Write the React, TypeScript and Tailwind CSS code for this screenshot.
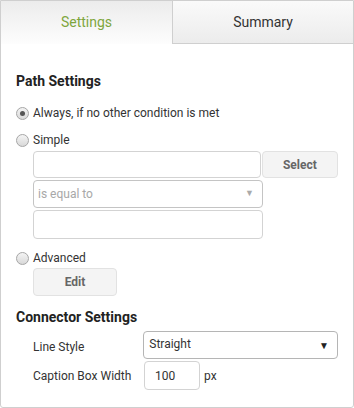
import React from "react";

function Radio({ checked }: { checked?: boolean }) {
  return (
    <span className="relative inline-block w-[13px] h-[13px] rounded-full border border-[#a6a6a6] bg-gradient-to-b from-[#f4f4f4] to-[#d9d9d9] shrink-0">
      {checked && (
        <span className="absolute left-[3px] top-[3px] w-[5px] h-[5px] rounded-full bg-[#555]" />
      )}
    </span>
  );
}

export default function App() {
  return (
    <div
      className="w-[354px] h-[408px] bg-white text-[#333] border border-[#cfcfcf] rounded-b-[3px] overflow-hidden flex flex-col"
      style={{ fontFamily: "Roboto, 'Liberation Sans', sans-serif" }}
    >
      <div className="flex h-[43px] shrink-0">
        <div className="w-[171px] flex items-center justify-center bg-gradient-to-b from-[#ececec] to-[#fdfdfd] text-[#7ea63d] text-[14px]">
          Settings
        </div>
        <div className="flex-1 flex items-center justify-center bg-gradient-to-b from-[#fafafa] to-[#ececec] border-l border-b border-[#cfcfcf] text-[#333] text-[14px]">
          Summary
        </div>
      </div>

      <div className="px-[15px] pt-[27px]">
        <h2 className="text-[14px] font-bold text-[#222] leading-[20px]">Path Settings</h2>

        <label className="flex items-center gap-[4px] mt-[14px] text-[12px] leading-[16px]">
          <Radio checked />
          Always, if no other condition is met
        </label>

        <label className="flex items-center gap-[4px] mt-[11px] text-[12px] leading-[16px]">
          <Radio />
          Simple
        </label>

        <div className="pl-[17px] mt-[3px] flex flex-col gap-[2px]">
          <div className="flex gap-[1px]">
            <div className="w-[230px] h-[27px] border border-[#d3d3d3] rounded-[4px]" />
            <button
              type="button"
              className="w-[77px] h-[27px] border border-[#e2e2e2] rounded-[4px] bg-[#f4f4f4] text-[12px] font-bold text-[#666]"
            >
              Select
            </button>
          </div>
          <div className="w-[230px] h-[28px] border border-[#c4c4c4] rounded-[4px] flex items-center justify-between px-[4px] text-[12px] text-[#a8a8a8]">
            <span>is equal to</span>
            <span className="text-[9px] text-[#aaa] pr-[4px]">▼</span>
          </div>
          <div className="w-[230px] h-[29px] border border-[#d3d3d3] rounded-[4px]" />
        </div>

        <label className="flex items-center gap-[4px] mt-[11px] text-[12px] leading-[16px]">
          <Radio />
          Advanced
        </label>

        <div className="pl-[17px] mt-[2px]">
          <button
            type="button"
            className="w-[84px] h-[28px] border border-[#e2e2e2] rounded-[4px] bg-[#f4f4f4] text-[12px] font-bold text-[#666]"
          >
            Edit
          </button>
        </div>

        <h2 className="text-[14px] font-bold text-[#222] leading-[20px] mt-[11px]">Connector Settings</h2>

        <div className="pl-[17px] mt-[4px] flex flex-col gap-[2px]">
          <div className="flex items-center">
            <span className="w-[111px] text-[12px] text-[#333] pt-[3px]">Line Style</span>
            <div className="w-[196px] h-[28px] border border-[#b5b5b5] rounded-[4px] flex items-center justify-between px-[5px] text-[12px] text-[#333]">
              <span className="-mt-[3px]">Straight</span>
              <span className="text-[10px] text-[#222] pr-[3px]">▼</span>
            </div>
          </div>
          <div className="flex items-center">
            <span className="w-[111px] text-[12px] text-[#333]">Caption Box Width</span>
            <div className="w-[56px] h-[29px] border border-[#d3d3d3] rounded-[4px] flex items-center px-[10px] text-[12px] text-[#333]">
              100
            </div>
            <span className="ml-[4px] text-[12px] text-[#333]">px</span>
          </div>
        </div>
      </div>
    </div>
  );
}
